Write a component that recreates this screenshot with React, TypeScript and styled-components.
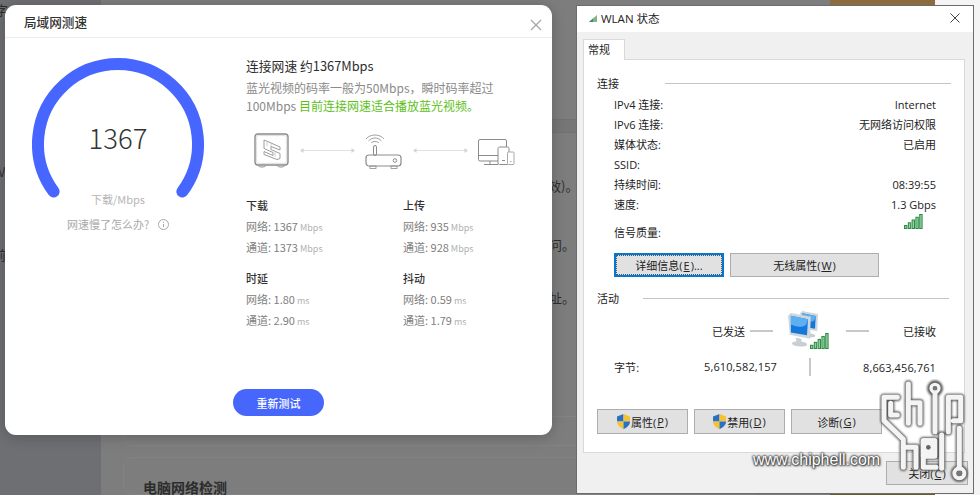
import React from 'react';
import styled, { createGlobalStyle } from 'styled-components';

const CJK = `"Noto Sans CJK SC", "Noto Sans", sans-serif`;
const WIN = `"Open Sans", "Noto Sans CJK SC", sans-serif`;

const Global = createGlobalStyle`
  html, body { margin: 0; padding: 0; background: #f4f4f4; }
`;

const Stage = styled.div`
  position: relative;
  width: 980px;
  height: 495px;
  overflow: hidden;
  font-family: ${CJK};
`;

/* ---------- dimmed page behind the dialogs ---------- */
const Backdrop = styled.div`
  display: flex;
  height: 100%;
`;
const Sidebar = styled.div`
  width: 101px;
  background: #6e6f73;
`;
const PageMain = styled.div`
  width: 729px;
  background: #7d7d7d;
  display: flex;
  flex-direction: column;
  padding-left: 22px;
  box-sizing: border-box;
  justify-content: flex-end;
  gap: 11px;
`;
const PageCard = styled.div<{ $h: number }>`
  height: ${p => p.$h}px;
  width: 640px;
  border: 1px solid #838383;
  border-radius: 10px;
  box-sizing: border-box;
  padding: 21px 19px 0;
  font-size: 14px;
  font-weight: 700;
  line-height: 16px;
  color: #2c2c2c;
`;
const Picture = styled.div`
  width: 105px;
  background: linear-gradient(180deg, #8c6c3e 0, #6e5a2c 100%);
`;
const PageEdge = styled.div`
  flex: 1;
  background: #f4f4f4;
`;
const Peek = styled.span<{ $x: number; $y: number }>`
  position: absolute;
  left: ${p => p.$x}px;
  top: ${p => p.$y}px;
  font-size: 13px;
  line-height: 16px;
  color: #2e2e2e;
  white-space: nowrap;
`;
const FoldLine = styled.div`
  position: absolute;
  left: 552px;
  top: 119px;
  width: 24px;
  height: 12px;
  border-top: 1px solid #727272;
  border-bottom: 1px solid #727272;
  background: #767676;
`;

/* ---------- speed test dialog ---------- */
const Dialog = styled.section`
  position: absolute;
  left: 5px;
  top: 5px;
  width: 547px;
  height: 430px;
  background: #fff;
  border-radius: 11px;
  box-shadow: 0 2px 14px rgba(0, 0, 0, 0.22);
  display: flex;
  flex-direction: column;
`;
const DialogHead = styled.header`
  height: 32px;
  flex: none;
  border-bottom: 1px solid #ececec;
  padding: 0 10px 0 19px;
  display: flex;
  align-items: center;
  justify-content: space-between;
  font-size: 12.6px;
  font-weight: 500;
  color: #333;
  box-sizing: content-box;
`;
const CloseGlyph = styled.svg`
  width: 12px;
  height: 12px;
  margin-top: 8px;
  stroke: #a9a9a9;
  stroke-width: 1.4;
  fill: none;
`;
const DialogBody = styled.div`
  display: flex;
  height: 351px;
  flex: none;
`;
const GaugeColumn = styled.div`
  width: 227px;
  flex: none;
  padding: 20px 0 0 27px;
  box-sizing: border-box;
`;
const Gauge = styled.div`
  display: grid;
  width: 172px;
  height: 149px;
  & > * { grid-area: 1 / 1; }
`;
const GaugeValue = styled.div`
  justify-self: center;
  align-self: start;
  margin-top: 58px;
  font-size: 27.5px;
  line-height: 42px;
  font-weight: 300;
  color: #333;
`;
const GaugeUnit = styled.div`
  justify-self: center;
  align-self: end;
  font-size: 11px;
  line-height: 16px;
  color: #b5b5b5;
`;
const GaugeHelp = styled.div`
  display: flex;
  align-items: center;
  gap: 9px;
  margin: 9px 0 0 35px;
  font-size: 11px;
  line-height: 16px;
  color: #a8a8a8;
  white-space: nowrap;
`;
const InfoIcon = styled.svg`
  width: 11px;
  height: 11px;
  flex: none;
`;
const Detail = styled.div`
  flex: 1;
  padding: 19px 0 0 14px;
`;
const DetailTitle = styled.h2`
  margin: 0;
  font-size: 12.8px;
  line-height: 18px;
  font-weight: 400;
  color: #2e2e2e;
`;
const DetailText = styled.p`
  margin: 4px 0 0;
  font-size: 12px;
  line-height: 18px;
  color: #8a8a8a;
`;
const DetailLine = styled.span`
  display: block;
  white-space: nowrap;
`;
const Good = styled.span`
  color: #5cbf16;
`;
const Topology = styled.div`
  display: flex;
  align-items: flex-start;
  margin: 18px 0 0 8px;
  height: 35px;
`;
const Link = styled.svg<{ $l: number; $r: number }>`
  width: 55px;
  height: 7px;
  flex: none;
  margin: 14px ${p => p.$r}px 0 ${p => p.$l}px;
`;
const StatGrid = styled.div`
  display: grid;
  grid-template-columns: 157px 140px;
  row-gap: 9px;
  margin-top: 26px;
`;
const StatHead = styled.div`
  height: 22px;
  font-size: 11px;
  line-height: 22px;
  font-weight: 500;
  color: #333;
`;
const StatRow = styled.div`
  height: 21px;
  font-size: 11px;
  line-height: 21px;
  color: #808080;
  white-space: nowrap;
`;
const Unit = styled.span`
  font-size: 9px;
  color: #b0b0b0;
  margin-left: 2px;
`;
const DialogFoot = styled.div`
  display: flex;
  justify-content: center;
`;
const Retest = styled.button`
  width: 91px;
  height: 27px;
  border: 0;
  padding: 0;
  border-radius: 14px;
  background: #4766fb;
  color: #fff;
  font-family: ${CJK};
  font-size: 11px;
  font-weight: 500;
`;

/* ---------- WLAN status window ---------- */
const Win = styled.section`
  position: absolute;
  left: 576px;
  top: 5px;
  width: 398px;
  height: 489px;
  box-sizing: border-box;
  border: 1px solid #6c6c6c;
  background: #f0f0f0;
  font-family: ${WIN};
  font-size: 11px;
  color: #222;
  display: flex;
  flex-direction: column;
`;
const TitleBar = styled.div`
  height: 26px;
  flex: none;
  background: #fff;
  display: flex;
  align-items: center;
  padding: 0 13px 2px 12px;
  box-sizing: border-box;
  font-size: 11.5px;
  color: #222;
`;
const TitleText = styled.span`
  margin-left: 4px;
  flex: 1;
`;
const WinClose = styled.svg`
  width: 10px;
  height: 10px;
  stroke: #444;
  stroke-width: 1;
  fill: none;
`;
const Tabs = styled.div`
  display: flex;
  padding: 7px 0 0 6px;
  flex: none;
`;
const Tab = styled.div`
  width: 42px;
  height: 21px;
  margin-bottom: -1px;
  position: relative;
  z-index: 1;
  box-sizing: border-box;
  background: #fff;
  border: 1px solid #d9d9d9;
  border-bottom: 0;
  padding-left: 4px;
  line-height: 19px;
`;
const Panel = styled.div`
  margin-left: 6px;
  width: 382px;
  height: 394px;
  flex: none;
  box-sizing: border-box;
  background: #fff;
  border: 1px solid #d9d9d9;
  padding: 13px 0 0 13px;
`;
const GroupHead = styled.div<{ $t?: number }>`
  display: flex;
  align-items: center;
  height: 20px;
  margin-top: ${p => p.$t ?? 0}px;
`;
const GroupRule = styled.div<{ $l: number; $r: number }>`
  height: 1px;
  background: #c4c4c4;
  flex: 1;
  margin: 0 ${p => p.$r}px 0 ${p => p.$l}px;
`;
const Info = styled.div`
  margin: 2px 28px 0 17px;
`;
const InfoRow = styled.div`
  display: flex;
  justify-content: space-between;
  height: 20px;
  line-height: 20px;
`;
const SignalRow = styled.div`
  display: flex;
  justify-content: space-between;
  height: 26px;
`;
const SignalLabel = styled.span`
  align-self: flex-end;
  line-height: 16px;
`;
const SignalMark = styled.svg`
  width: 19px;
  height: 15px;
  margin-right: 13px;
  margin-top: -1px;
`;
const ActionRow = styled.div<{ $l: number; $t: number }>`
  display: flex;
  gap: 6px;
  margin: ${p => p.$t}px 0 0 ${p => p.$l}px;
`;
const WinButton = styled.button<{ $w: number; $h?: number; $focus?: boolean }>`
  width: ${p => p.$w}px;
  height: ${p => p.$h ?? 25}px;
  padding: 0;
  box-sizing: border-box;
  background: #e1e1e1;
  border: ${p => (p.$focus ? '2px solid #0078d7' : '1px solid #adadad')};
  outline: ${p => (p.$focus ? '1px dotted #555' : 'none')};
  outline-offset: -3px;
  font-family: ${WIN};
  font-size: 11px;
  color: #222;
  display: flex;
  align-items: center;
  justify-content: center;
  gap: 1px;
`;
const Flow = styled.div`
  display: flex;
  align-items: center;
  height: 42px;
  margin: 2px 0 0 115px;
`;
const FlowDash = styled.div<{ $l: number; $r: number }>`
  width: 23px;
  height: 2px;
  background: #c8c8c8;
  margin: 0 ${p => p.$r}px 0 ${p => p.$l}px;
`;
const Bytes = styled.div`
  display: grid;
  grid-template-columns: 163px 66px 93px;
  align-items: center;
  height: 20px;
  margin: 5px 0 0 17px;
  letter-spacing: 0.12px;
`;
const BytesLeft = styled.div`
  display: flex;
  justify-content: space-between;
`;
const BytesRule = styled.div`
  justify-self: center;
  width: 2px;
  height: 18px;
  background: #c8c8c8;
`;
const BytesRight = styled.div`
  text-align: right;
`;
const WinFoot = styled.div`
  display: flex;
  justify-content: flex-end;
  padding: 8px 5px 0 0;
`;

/* ---------- watermark ---------- */
const Mark = styled.svg`
  position: absolute;
  left: 840px;
  top: 360px;
  width: 140px;
  height: 135px;
`;
const MarkText = styled.span`
  position: absolute;
  left: 753px;
  top: 451px;
  font-family: "Liberation Sans", sans-serif;
  font-size: 16px;
  line-height: 18px;
  color: #fff;
  text-shadow: 0 0 2px #333, 0 0 2px #333, 0 0 3px #444, 1px 1px 2px #555;
`;

/* ---------- drawings ---------- */
const Gray = '#8b8b8b';

const NasIcon = () => (
  <svg width="35" height="35" viewBox="0 0 35 35" fill="none" style={{ flex: 'none' }}>
    <rect x="1" y="1" width="33" height="31" rx="3" stroke={Gray} strokeWidth="1.4" />
    <rect x="2.600" y="2.600" width="29.800" height="27.800" rx="2" stroke="#d6d6d6" strokeWidth="0.8" />
    <path d="M4 32.500c1 2 7 2 8 0M23 32.500c1 2 7 2 8 0" stroke={Gray} />
    <path d="M10 7l7 3 9 4v3l-9-3.500v3l9 4v5l-3 1-13-5v-3l9 4v-3l-9-4V7z" stroke="#9c9c9c" strokeWidth="1" strokeLinejoin="round" />
    <path d="M13 8.500v5M17 10v5M21 18v6" stroke="#c4c4c4" strokeWidth="0.8" />
  </svg>
);

const RouterIcon = () => (
  <svg width="37" height="36" viewBox="0 0 37 36" fill="none" style={{ flex: 'none' }}>
    <path d="M1 6C5 .7 15 .7 19 6" stroke="#a0a0a0" />
    <path d="M3.500 8C7 4 13 4 16.500 8" stroke="#a0a0a0" />
    <path d="M6 10c2-2 6-2 8 0" stroke="#a0a0a0" />
    <rect x="8.500" y="12.500" width="3" height="10" rx="1.500" stroke={Gray} />
    <rect x="1" y="22" width="35" height="11" rx="3" stroke={Gray} strokeWidth="1.2" />
    <circle cx="30" cy="27.500" r="1.800" stroke={Gray} />
    <rect x="5" y="33" width="6" height="2.500" stroke={Gray} strokeWidth="0.8" />
    <rect x="26" y="33" width="6" height="2.500" stroke={Gray} strokeWidth="0.8" />
  </svg>
);

const DevicesIcon = () => (
  <svg width="37" height="27" viewBox="0 0 37 27" fill="none" style={{ flex: 'none', marginTop: 6 }}>
    <path d="M20 22H2a1.500 1.500 0 0 1-1.500-1.500V2A1.500 1.500 0 0 1 2 .5h25A1.500 1.500 0 0 1 28.500 2v6" stroke={Gray} />
    <path d="M.5 16.500H20M12 22v3M6 25.500h14" stroke={Gray} />
    <rect x="20" y="8" width="11" height="17.500" rx="1.500" fill="#fff" stroke={Gray} />
    <path d="M24 21.500h3" stroke={Gray} />
    <rect x="29.500" y="13" width="6.500" height="12.500" rx="1" fill="#fff" stroke="#aaa" />
    <path d="M32 22.500h1.500" stroke="#aaa" />
  </svg>
);

const LinkArrow = ({ l, r }: { l: number; r: number }) => (
  <Link $l={l} $r={r} viewBox="0 0 55 7" fill="none">
    <path d="M3 3.500H52" stroke="#e0e0e0" />
    <path d="M0 3.500l3.500-2.500v5zM55 3.500l-3.500-2.500v5z" fill="#d4d4d4" />
  </Link>
);

const Bars = ({ n = 5 }: { n?: number }) => (
  <>
    {Array.from({ length: n }).map((_, i) => {
      const h = 4 + i * (11 / (n - 1 || 1));
      return (
        <g key={i}>
          <rect x={i * 3.800} y={15 - h} width={3.400} height={h} fill="#2f8a46" />
          <rect x={i * 3.800 + 1} y={15 - h + 1} width={1.400} height={h - 2} fill="#8fd2a0" />
        </g>
      );
    })}
  </>
);

const Shield = () => (
  <svg width="13" height="15" viewBox="0 0 13 15" style={{ flex: 'none' }}>
    <path d="M6.500 0L0 2.500V7.500H6.500Z" fill="#2c6fc6" />
    <path d="M6.500 0L13 2.500V7.500H6.500Z" fill="#f3c332" />
    <path d="M0 7.500C0 11 3 13.500 6.500 15V7.500Z" fill="#f3c332" />
    <path d="M13 7.500C13 11 10 13.500 6.500 15V7.500Z" fill="#2c6fc6" />
  </svg>
);

const Monitor = ({ x, y, s }: { x: number; y: number; s: number }) => (
  <g transform={`translate(${x} ${y}) scale(${s})`}>
    <path d="M8 26l6 1 0 3 4 1c3 1 3 4-1 4-6 1-12-1-13-3 0-1 3-2 5-2z" fill="#c9ced2" />
    <path d="M0 3L3 0 24 4 23 27 2 23z" fill="#cfd6dc" />
    <path d="M3 3l18 3.500-1 17-17-3z" fill="#1477dc" />
    <path d="M3 3l18 3.500-2 6C13 16 8 14 3 12z" fill="#5cb0f2" />
  </g>
);

const NetworkIcon = () => (
  <svg width="44" height="42" viewBox="0 0 44 42" style={{ flex: 'none' }}>
    <Monitor x={13} y={1} s={0.75} />
    <Monitor x={1} y={3} s={0.95} />
    <g transform="translate(23 23) scale(1 1.07)">
      <Bars />
    </g>
  </svg>
);

const logoPaths = [
  'M172,112 H132 V182 L190,238 V322',
  'M152,130 V165 H172',
  'M205,72 V190',
  'M205,128 H240 V190',
  'M285,98 V215',
  'M325,215 V112 H362 V182 H340',
  'M190,262 H228 V322',
  'M250,242 H284 V288 H250 Z',
  'M250,288 V322 H288',
  'M305,225 V325',
  'M358,205 V325',
];

const Watermark = () => (
  <Mark viewBox="0 0 420 405" fill="none" strokeLinecap="round" strokeLinejoin="round">
    <defs>
      <filter id="soft" x="-5%" y="-5%" width="110%" height="110%">
        <feGaussianBlur stdDeviation="2.500" />
      </filter>
    </defs>
    <g stroke="#5a5a5a" strokeWidth="22" filter="url(#soft)">
      {logoPaths.map(d => <path key={d} d={d} />)}
      <circle cx="285" cy="85" r="13" />
      <circle cx="358" cy="340" r="15" />
    </g>
    <g stroke="#f4f4f4" strokeWidth="15">
      {logoPaths.map(d => <path key={d} d={d} />)}
      <path d="M250,242 H284 V288 H250 Z" fill="#f4f4f4" />
      <circle cx="285" cy="85" r="12" strokeWidth="10" />
      <circle cx="358" cy="340" r="15" strokeWidth="12" />
    </g>
    <circle cx="265" cy="262" r="7" fill="#666" />
    <circle cx="285" cy="85" r="6" fill="#777" />
    <circle cx="358" cy="340" r="8" fill="#777" />
  </Mark>
);

type Stat = { title: string; unit: string; net: string; chan: string };
const stats: Stat[] = [
  { title: '下载', unit: 'Mbps', net: '1367', chan: '1373' },
  { title: '上传', unit: 'Mbps', net: '935', chan: '928' },
  { title: '时延', unit: 'ms', net: '1.80', chan: '2.90' },
  { title: '抖动', unit: 'ms', net: '0.59', chan: '1.79' },
];

const infoRows: [string, string][] = [
  ['IPv4 连接:', 'Internet'],
  ['IPv6 连接:', '无网络访问权限'],
  ['媒体状态:', '已启用'],
  ['SSID:', ''],
  ['持续时间:', '08:39:55'],
  ['速度:', '1.3 Gbps'],
];

export default function App() {
  return (
    <Stage>
      <Global />
      <Backdrop>
        <Sidebar />
        <PageMain>
          <PageCard $h={30} />
          <PageCard $h={38}>电脑网络检测</PageCard>
        </PageMain>
        <Picture />
        <PageEdge />
      </Backdrop>
      <Peek $x={-5} $y={2}>字</Peek>
      <Peek $x={-2} $y={164}>VS</Peek>
      <Peek $x={-7} $y={247}>前</Peek>
      <Peek $x={548} $y={178}>效)。</Peek>
      <Peek $x={549} $y={237}>问。</Peek>
      <Peek $x={549} $y={290}>址。</Peek>
      <FoldLine />

      <Dialog>
        <DialogHead>
          局域网测速
          <CloseGlyph viewBox="0 0 12 12"><path d="M1 1l10 10M11 1L1 11" /></CloseGlyph>
        </DialogHead>
        <DialogBody>
          <GaugeColumn>
            <Gauge>
              <svg width="172" height="149" viewBox="0 0 172 149" fill="none">
                <path d="M21.600 133.500A80 80 0 1 1 150.400 133.500" stroke="#4766ff" strokeWidth="12" strokeLinecap="round" />
              </svg>
              <GaugeValue>1367</GaugeValue>
              <GaugeUnit>下载/Mbps</GaugeUnit>
            </Gauge>
            <GaugeHelp>
              网速慢了怎么办?
              <InfoIcon viewBox="0 0 11 11" fill="none">
                <circle cx="5.500" cy="5.500" r="5" stroke="#a8a8a8" />
                <path d="M5.500 5v3" stroke="#a8a8a8" />
                <circle cx="5.500" cy="3.300" r=".6" fill="#a8a8a8" />
              </InfoIcon>
            </GaugeHelp>
          </GaugeColumn>
          <Detail>
            <DetailTitle>连接网速 约1367Mbps</DetailTitle>
            <DetailText>
              <DetailLine>蓝光视频的码率一般为50Mbps，瞬时码率超过</DetailLine>
              <DetailLine>100Mbps <Good>目前连接网速适合播放蓝光视频。</Good></DetailLine>
            </DetailText>
            <Topology>
              <NasIcon />
              <LinkArrow l={11} r={10} />
              <RouterIcon />
              <LinkArrow l={11} r={10} />
              <DevicesIcon />
            </Topology>
            <StatGrid>
              {stats.map(s => (
                <div key={s.title}>
                  <StatHead>{s.title}</StatHead>
                  <StatRow>网络: {s.net}<Unit>{s.unit}</Unit></StatRow>
                  <StatRow>通道: {s.chan}<Unit>{s.unit}</Unit></StatRow>
                </div>
              ))}
            </StatGrid>
          </Detail>
        </DialogBody>
        <DialogFoot>
          <Retest>重新测试</Retest>
        </DialogFoot>
      </Dialog>

      <Win>
        <TitleBar>
          <svg width="8" height="7" viewBox="0 0 8 7" style={{ flex: 'none' }}>
            <path d="M0 7L8 0V7Z" fill="#7fb48c" />
            <path d="M0 7L4 3.500V7Z" fill="#3d8f52" />
          </svg>
          <TitleText>WLAN 状态</TitleText>
          <WinClose viewBox="0 0 10 10"><path d="M.5.5l9 9M9.500.5l-9 9" /></WinClose>
        </TitleBar>
        <Tabs><Tab>常规</Tab></Tabs>
        <Panel>
          <GroupHead>连接<GroupRule $l={46} $r={13} /></GroupHead>
          <Info>
            {infoRows.map(([k, v]) => (
              <InfoRow key={k}><span>{k}</span><span>{v}</span></InfoRow>
            ))}
            <SignalRow>
              <SignalLabel>信号质量:</SignalLabel>
              <SignalMark viewBox="0 0 19 15"><Bars /></SignalMark>
            </SignalRow>
          </Info>
          <ActionRow $l={17} $t={12}>
            <WinButton $w={110} $h={24} $focus>详细信息(<u>E</u>)...</WinButton>
            <WinButton $w={149} $h={24}>无线属性(<u>W</u>)</WinButton>
          </ActionRow>
          <GroupHead $t={11}>活动<GroupRule $l={24} $r={15} /></GroupHead>
          <Flow>
            已发送
            <FlowDash $l={5} $r={14} />
            <NetworkIcon />
            <FlowDash $l={15} $r={34} />
            已接收
          </Flow>
          <Bytes>
            <BytesLeft><span>字节:</span><span>5,610,582,157</span></BytesLeft>
            <BytesRule />
            <BytesRight>8,663,456,761</BytesRight>
          </Bytes>
          <ActionRow $l={0} $t={32}>
            <WinButton $w={91}><Shield />属性(<u>P</u>)</WinButton>
            <WinButton $w={91}><Shield />禁用(<u>D</u>)</WinButton>
            <WinButton $w={91}>诊断(<u>G</u>)</WinButton>
          </ActionRow>
        </Panel>
        <WinFoot>
          <WinButton $w={82} $h={24}>关闭(<u>C</u>)</WinButton>
        </WinFoot>
      </Win>

      <MarkText>www.chiphell.com</MarkText>
      <Watermark />
    </Stage>
  );
}
